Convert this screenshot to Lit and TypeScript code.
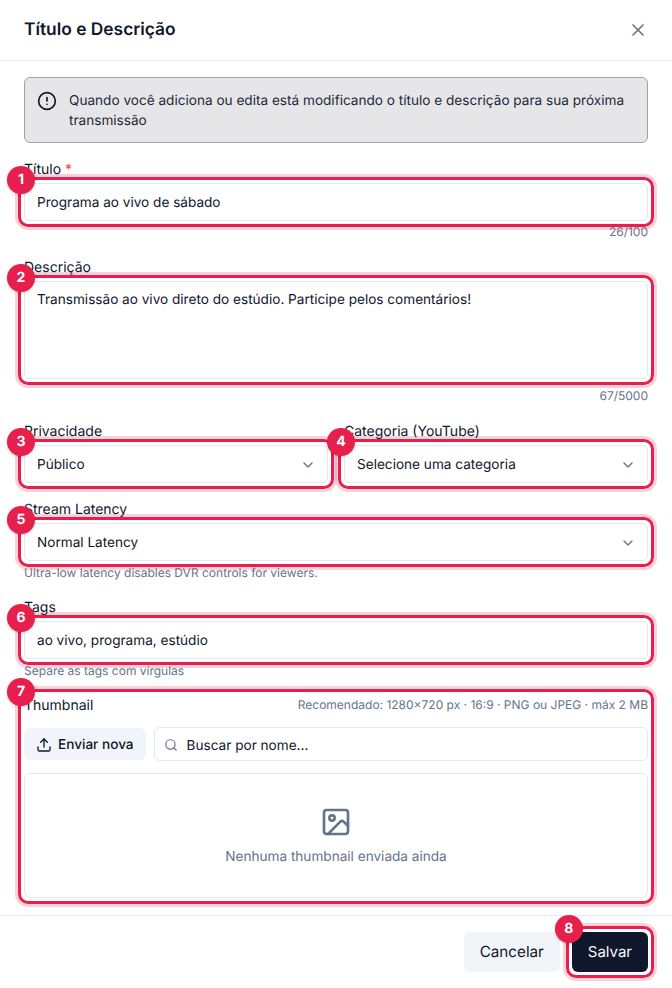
import { LitElement, html, css } from "lit";
import { customElement } from "lit/decorators.js";

const chevron = html`<svg class="chev" viewBox="0 0 24 24" fill="none" stroke="currentColor" stroke-width="2" stroke-linecap="round" stroke-linejoin="round"><path d="m6 9 6 6 6-6"/></svg>`;

@customElement("app-mark")
class AppMark extends LitElement {
  static properties = { n: {} };
  n = "";
  static styles = css`
    :host { display: block; position: relative; }
    .ring {
      position: absolute;
      inset: -6px;
      border: 3px solid #e61f4d;
      border-radius: 10px;
      box-shadow: 0 0 0 3px rgba(230, 31, 77, 0.2);
      pointer-events: none;
    }
    .badge {
      position: absolute;
      left: -17px;
      top: -17px;
      width: 28px;
      height: 28px;
      border-radius: 50%;
      background: #e61f4d;
      color: #fff;
      font: 700 14px/28px Inter, sans-serif;
      text-rendering: geometricPrecision;
      text-align: center;
      box-shadow: 0 1px 3px rgba(0, 0, 0, 0.2);
    }
  `;
  render() {
    return html`<slot></slot><div class="ring"></div><div class="badge">${this.n}</div>`;
  }
}

@customElement("app-root")
class AppRoot extends LitElement {
  static styles = css`
    :host {
      display: flex;
      flex-direction: column;
      width: 672px;
      height: 988px;
      background: #fff;
      color: #0f172a;
      font: 400 13.6px/20px Inter, sans-serif;
      text-rendering: geometricPrecision;
      overflow: hidden;
    }
    * { box-sizing: border-box; }
    .head {
      height: 61px;
      flex: none;
      border-bottom: 1px solid #e2e8f0;
      padding: 0 24px;
      display: flex;
      align-items: center;
      justify-content: space-between;
    }
    h2 { margin: 0; font: 600 17.35px/28px Inter, sans-serif; color: #0f172a; }
    .close { width: 20px; height: 20px; color: #64748b; display: block; }
    .body {
      flex: 1;
      min-height: 0;
      padding: 16px 24px;
      display: flex;
      flex-direction: column;
      gap: 16px;
    }
    .alert {
      display: flex;
      gap: 12px;
      padding: 13px 12px 11px;
      background: #e6e6e9;
      border: 1px solid #a1a1aa;
      border-radius: 6px;
      color: #1e293b;
    }
    .alert svg { width: 20px; height: 20px; flex: none; color: #18181b; }
    .label { display: block; font-size: 14px; font-weight: 400; padding-top: 1px; margin-bottom: 3px; color: #0f172a; }
    .req { color: #ef4444; }
    .control {
      height: 38px;
      border: 1px solid #e2e8f0;
      border-radius: 6px;
      padding: 1px 11px 0 12px;
      display: flex;
      align-items: center;
      justify-content: space-between;
      background: #fff;
    }
    .area { height: 98px; align-items: flex-start; padding-top: 8px; }
    .chev { width: 16px; height: 16px; color: #64748b; flex: none; }
    .count { margin: 3px 0 1px; text-align: right; font-size: 12px; line-height: 16px; color: #64748b; }
    .help { margin: 4px 0 0; font-size: 12px; line-height: 16px; color: #64748b; }
    .area-wrap { margin-bottom: 9px; }
    .two { display: grid; grid-template-columns: 1fr 1fr; gap: 16px; }
    .thumb-head { display: flex; justify-content: space-between; align-items: flex-start; height: 20px; margin-bottom: 12px; }
    .thumb-head .label { margin: 0; }
    .hint { font-size: 12px; line-height: 16px; padding-top: 2px; color: #64748b; }
    .tools { display: flex; gap: 8px; margin-bottom: 12px; }
    .upload {
      flex: none;
      height: 32px;
      margin-top: 1px;
      padding: 2px 12px 0;
      display: flex;
      align-items: center;
      gap: 6px;
      border-radius: 6px;
      background: #f1f5f9;
      font-weight: 500;
      color: #0f172a;
    }
    .upload svg { width: 16px; height: 16px; }
    .search {
      flex: 1;
      height: 34px;
      border: 1px solid #e2e8f0;
      border-radius: 6px;
      display: flex;
      align-items: center;
      gap: 9px;
      padding: 3px 9px 0;
    }
    .search svg { width: 14px; height: 14px; color: #64748b; margin-top: -2px; }
    .drop {
      border: 1px solid #e2e8f0;
      border-radius: 6px;
      height: 125px;
      padding-top: 1px;
      display: flex;
      flex-direction: column;
      align-items: center;
      justify-content: center;
      gap: 9px;
      color: #64748b;
    }
    .drop svg { width: 32px; height: 32px; }
    .foot {
      flex: none;
      height: 73px;
      border-top: 1px solid #e2e8f0;
      padding: 16px 24px;
      display: flex;
      justify-content: flex-end;
      gap: 12px;
    }
    button {
      height: 40px;
      border: 0;
      border-radius: 6px;
      padding: 0 16px;
      font: 400 15.2px/24px Inter, sans-serif;
      text-rendering: geometricPrecision;
    }
    .cancel { background: #f1f5f9; color: #0f172a; }
    .save { background: #0f172a; color: #f8fafc; display: block; font-size: 15px; }
  `;

  render() {
    return html`
      <div class="head">
        <h2>Título e Descrição</h2>
        <svg class="close" viewBox="0 0 24 24" fill="none" stroke="currentColor" stroke-width="2" stroke-linecap="round" stroke-linejoin="round"><path d="M18 6 6 18"/><path d="m6 6 12 12"/></svg>
      </div>
      <div class="body">
        <div class="alert">
          <svg viewBox="0 0 24 24" fill="none" stroke="currentColor" stroke-width="2" stroke-linecap="round" stroke-linejoin="round"><circle cx="12" cy="12" r="10"/><line x1="12" y1="8" x2="12" y2="12"/><line x1="12" y1="16" x2="12.01" y2="16"/></svg>
          <div>Quando você adiciona ou edita está modificando o título e descrição para sua próxima transmissão</div>
        </div>
        <div>
          <span class="label">Título <span class="req">*</span></span>
          <app-mark n="1"><div class="control">Programa ao vivo de sábado</div></app-mark>
          <p class="count">26/100</p>
        </div>
        <div>
          <span class="label">Descrição</span>
          <app-mark n="2" class="area-wrap"><div class="control area">Transmissão ao vivo direto do estúdio. Participe pelos comentários!</div></app-mark>
          <p class="count">67/5000</p>
        </div>
        <div class="two">
          <div>
            <span class="label">Privacidade</span>
            <app-mark n="3"><div class="control">Público${chevron}</div></app-mark>
          </div>
          <div>
            <span class="label">Categoria (YouTube)</span>
            <app-mark n="4"><div class="control">Selecione uma categoria${chevron}</div></app-mark>
          </div>
        </div>
        <div>
          <span class="label">Stream Latency</span>
          <app-mark n="5"><div class="control">Normal Latency${chevron}</div></app-mark>
          <p class="help">Ultra-low latency disables DVR controls for viewers.</p>
        </div>
        <div>
          <span class="label">Tags</span>
          <app-mark n="6"><div class="control">ao vivo, programa, estúdio</div></app-mark>
          <p class="help">Separe as tags com vírgulas</p>
        </div>
        <app-mark n="7">
          <div class="thumb-head">
            <span class="label">Thumbnail</span>
            <span class="hint">Recomendado: 1280×720 px · 16:9 · PNG ou JPEG · máx 2 MB</span>
          </div>
          <div class="tools">
            <div class="upload">
              <svg viewBox="0 0 24 24" fill="none" stroke="currentColor" stroke-width="2" stroke-linecap="round" stroke-linejoin="round"><path d="M12 3v12"/><path d="m17 8-5-5-5 5"/><path d="M21 15v4a2 2 0 0 1-2 2H5a2 2 0 0 1-2-2v-4"/></svg>
              Enviar nova
            </div>
            <div class="search">
              <svg viewBox="0 0 24 24" fill="none" stroke="currentColor" stroke-width="2" stroke-linecap="round" stroke-linejoin="round"><circle cx="11" cy="11" r="8"/><path d="m21 21-4.3-4.3"/></svg>
              Buscar por nome...
            </div>
          </div>
          <div class="drop">
            <svg viewBox="0 0 24 24" fill="none" stroke="currentColor" stroke-width="2" stroke-linecap="round" stroke-linejoin="round"><rect x="3" y="3" width="18" height="18" rx="2"/><circle cx="9" cy="9" r="2"/><path d="m21 15-3.086-3.086a2 2 0 0 0-2.828 0L6 21"/></svg>
            Nenhuma thumbnail enviada ainda
          </div>
        </app-mark>
      </div>
      <div class="foot">
        <button class="cancel">Cancelar</button>
        <app-mark n="8"><button class="save">Salvar</button></app-mark>
      </div>
    `;
  }
}
